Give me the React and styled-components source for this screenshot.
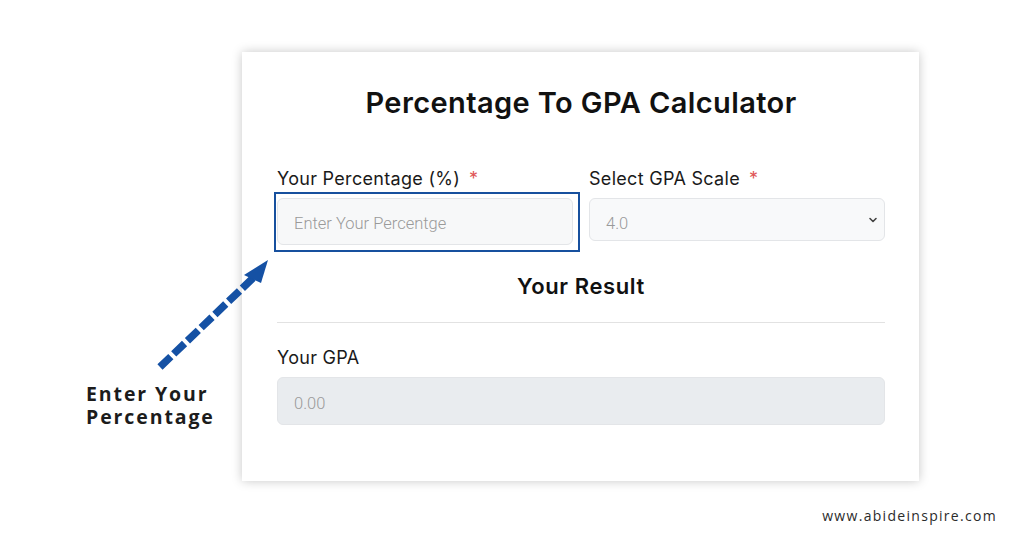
import React from "react";
import styled, { createGlobalStyle } from "styled-components";

const Global = createGlobalStyle`
  html, body { margin: 0; padding: 0; background: #ffffff; }
  body { font-family: "Inter", "Noto Sans", sans-serif; }
  * { box-sizing: border-box; }
`;

const Page = styled.div`
  position: relative;
  width: 1024px;
  height: 536px;
  display: flex;
  flex-direction: column;
  padding-top: 52px;
  overflow: hidden;
`;

const Row = styled.div`
  display: flex;
  align-items: stretch;
`;

const Side = styled.div`
  width: 242px;
  display: flex;
  flex-direction: column;
  justify-content: flex-start;
  padding: 330px 0 0 86px;
`;

const Callout = styled.div`
  font-family: "Open Sans", "Lato", sans-serif;
  font-weight: 700;
  font-size: 19.5px;
  line-height: 23px;
  letter-spacing: 1.9px;
  color: #1c1c1c;
`;

const CalloutLine = styled.div`
  height: 23px;
  white-space: nowrap;
`;

const Card = styled.div`
  width: 677px;
  height: 429px;
  background: #fff;
  box-shadow: 0 0 10px rgba(0, 0, 0, 0.22);
  padding: 34px 34px 0 35px;
  display: flex;
  flex-direction: column;
`;

const Title = styled.h1`
  margin: 0;
  text-align: center;
  font-size: 29px;
  line-height: 34px;
  font-weight: 600;
  color: #111;
  letter-spacing: 0.4px;
`;

const Fields = styled.div`
  margin-top: 48px;
  display: grid;
  grid-template-columns: 296px 296px;
  column-gap: 16px;
  align-items: start;
`;

const Field = styled.div`
  display: flex;
  flex-direction: column;
`;

const Label = styled.label`
  font-size: 18px;
  line-height: 22px;
  letter-spacing: 0.3px;
  color: #1a1a1a;
  margin-bottom: 8px;
  & span {
    color: #e05656;
    margin-left: 9px;
  }
`;

const Wrap = styled.div`
  position: relative;
`;

const Highlight = styled.div`
  position: absolute;
  top: -6px;
  left: -3px;
  right: -7px;
  bottom: -7px;
  border: 2px solid #17509e;
  pointer-events: none;
`;

const Input = styled.div`
  height: ${(p) => p.$h}px;
  border: 1px solid #e3e5e8;
  border-radius: 6px;
  background: ${(p) => p.$bg || "#f7f8f9"};
  display: flex;
  align-items: center;
  justify-content: space-between;
  padding: ${(p) => p.$pt || 3}px 6px 0 16px;
  font-family: "Roboto", sans-serif;
  font-weight: 300;
  font-size: 16.5px;
  color: #9a9a9a;
`;

const Chevron = styled.svg`
  width: 10px;
  height: 10px;
  margin-top: -8px;
`;

const SubTitle = styled.h2`
  margin: 28px 0 0;
  text-align: center;
  font-size: 22px;
  line-height: 26px;
  font-weight: 600;
  letter-spacing: 0.6px;
  color: #111;
`;

const Rule = styled.hr`
  margin: 23px 0 0;
  border: 0;
  height: 1px;
  background: #e2e2e2;
`;

const Result = styled.div`
  margin-top: 24px;
  display: flex;
  flex-direction: column;
`;

const Footer = styled.div`
  align-self: flex-end;
  margin: 25px 27px 0 0;
  font-family: "Open Sans", "Lato", sans-serif;
  font-size: 14px;
  letter-spacing: 1.3px;
  color: #2b2b2b;
`;

const Arrow = styled.svg`
  position: absolute;
  left: 150px;
  top: 250px;
  width: 130px;
  height: 130px;
  overflow: visible;
`;

export default function App() {
  return (
    <>
      <Global />
      <Page>
        <Row>
          <Side>
            <Callout>
              <CalloutLine>Enter Your</CalloutLine>
              <CalloutLine>Percentage</CalloutLine>
            </Callout>
          </Side>
          <Card>
            <Title>Percentage To GPA Calculator</Title>
            <Fields>
              <Field>
                <Label>
                  Your Percentage (%)<span>*</span>
                </Label>
                <Wrap>
                  <Input $h={47}>Enter Your Percentge</Input>
                  <Highlight />
                </Wrap>
              </Field>
              <Field>
                <Label>
                  Select GPA Scale<span>*</span>
                </Label>
                <Input $h={43} $pt={8} $bg="#f8f9fa">
                  4.0
                  <Chevron viewBox="0 0 10 10">
                    <path d="M2 3.5 L5 6.5 L8 3.5" fill="none" stroke="#444" strokeWidth="1.6" strokeLinecap="round" strokeLinejoin="round" />
                  </Chevron>
                </Input>
              </Field>
            </Fields>
            <SubTitle>Your Result</SubTitle>
            <Rule />
            <Result>
              <Label>Your GPA</Label>
              <Input $h={48} $pt={5} $bg="#e9ecef">0.00</Input>
            </Result>
          </Card>
        </Row>
        <Footer>www.abideinspire.com</Footer>
        <Arrow viewBox="0 0 130 130">
          <line x1="10" y1="117" x2="103" y2="28" stroke="#1551a4" strokeWidth="7.5" strokeDasharray="15 4" />
          <polygon points="118,10 94,25 111,33" fill="#1551a4" />
        </Arrow>
      </Page>
    </>
  );
}
